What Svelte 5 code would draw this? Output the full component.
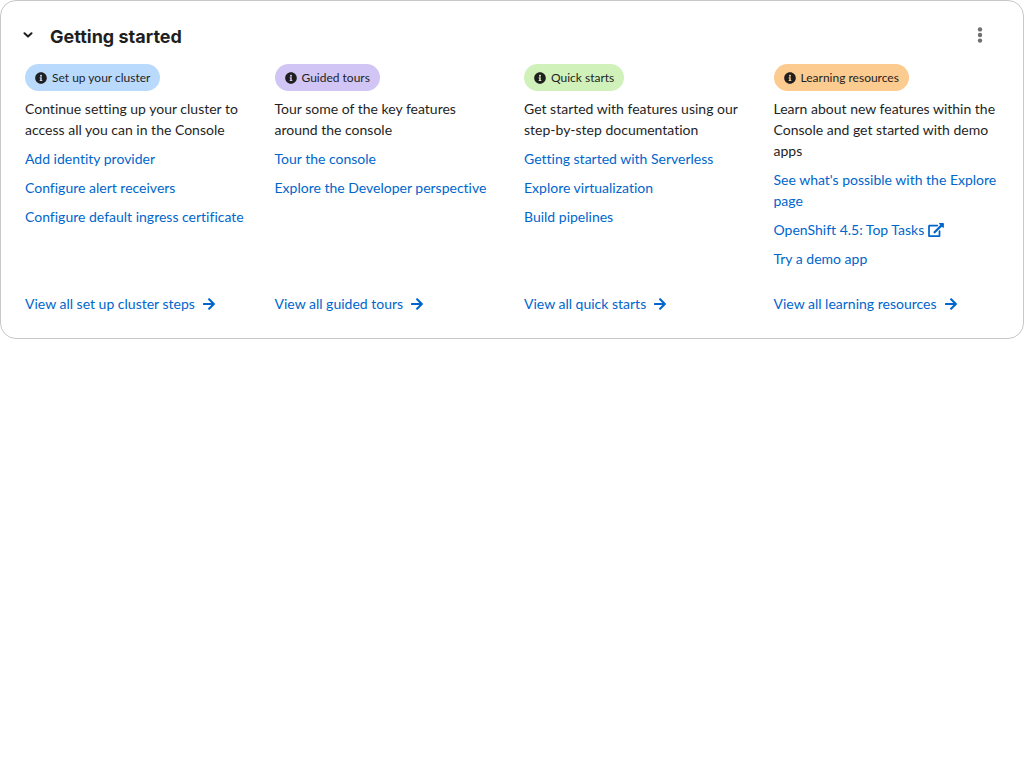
<script>
  let open = $state(true);

  const sections = [
    {
      tone: 'blue',
      title: 'Set up your cluster',
      description: 'Continue setting up your cluster to access all you can in the Console',
      links: [
        { text: 'Add identity provider' },
        { text: 'Configure alert receivers' },
        { text: 'Configure default ingress certificate' }
      ],
      more: 'View all set up cluster steps'
    },
    {
      tone: 'purple',
      title: 'Guided tours',
      description: 'Tour some of the key features around the console',
      links: [{ text: 'Tour the console' }, { text: 'Explore the Developer perspective' }],
      more: 'View all guided tours'
    },
    {
      tone: 'green',
      title: 'Quick starts',
      description: 'Get started with features using our step-by-step documentation',
      links: [
        { text: 'Getting started with Serverless' },
        { text: 'Explore virtualization' },
        { text: 'Build pipelines' }
      ],
      more: 'View all quick starts'
    },
    {
      tone: 'orange',
      title: 'Learning resources',
      description: 'Learn about new features within the Console and get started with demo apps',
      links: [
        { text: "See what's possible with the Explore page" },
        { text: 'OpenShift 4.5: Top Tasks', external: true },
        { text: 'Try a demo app' }
      ],
      more: 'View all learning resources'
    }
  ];
</script>

<section class="card">
  <header>
    <button class="toggle" class:closed={!open} type="button" aria-label="Toggle getting started" aria-expanded={open} onclick={() => (open = !open)}>
      <svg viewBox="0 0 10 6" width="10" height="6" aria-hidden="true">
        <path d="M1.5 1.3 5 4.6 8.5 1.3" fill="none" stroke="currentColor" stroke-width="2" stroke-linecap="round" stroke-linejoin="round" />
      </svg>
    </button>
    <h2>Getting started</h2>
    <button class="menu" type="button" aria-label="Actions">
      <svg viewBox="0 0 6 16" width="6" height="16" fill="currentColor" aria-hidden="true">
        <circle cx="3" cy="2.4" r="2.2" /><circle cx="3" cy="8" r="2.2" /><circle cx="3" cy="13.6" r="2.2" />
      </svg>
    </button>
  </header>

  {#if open}
    <div class="grid">
      {#each sections as section}
        <article>
          <h3 class="label {section.tone}">
            <svg viewBox="0 0 512 512" width="12" height="12" fill="currentColor" aria-hidden="true">
              <path d="M256 8C119.043 8 8 119.083 8 256c0 136.997 111.043 248 248 248s248-111.003 248-248C504 119.083 392.957 8 256 8zm0 110c23.196 0 42 18.804 42 42s-18.804 42-42 42-42-18.804-42-42 18.804-42 42-42zm56 254c0 6.627-5.373 12-12 12h-88c-6.627 0-12-5.373-12-12v-24c0-6.627 5.373-12 12-12h12v-64h-12c-6.627 0-12-5.373-12-12v-24c0-6.627 5.373-12 12-12h64c6.627 0 12 5.373 12 12v100h12c6.627 0 12 5.373 12 12v24z" />
            </svg>
            {section.title}
          </h3>
          <p>{section.description}</p>
          <ul>
            {#each section.links as link}
              <li>
                <a href="#top">{link.text}{#if link.external}<svg class="external" viewBox="0 0 576 512" width="16" height="14" fill="currentColor" aria-hidden="true"><path d="M576 24v127.984c0 21.461-25.96 31.98-40.971 16.971l-35.707-35.709-243.523 243.523c-9.373 9.373-24.568 9.373-33.941 0l-22.627-22.627c-9.373-9.373-9.373-24.569 0-33.941L442.756 76.676l-35.703-35.705C391.982 25.9 402.656 0 424.024 0H552c13.255 0 24 10.745 24 24zM407.029 270.794l-16 16A23.999 23.999 0 0 0 384 303.765V448H64V128h264a24.003 24.003 0 0 0 16.97-7.029l16-16C376.089 89.851 365.381 64 344 64H48C21.49 64 0 85.49 0 112v352c0 26.51 21.49 48 48 48h352c26.51 0 48-21.49 48-48V287.764c0-21.382-25.852-32.09-40.971-16.97z" /></svg>{/if}</a>
              </li>
            {/each}
          </ul>
          <a class="more" href="#top">
            {section.more}
            <svg viewBox="0 0 448 512" width="12" height="14" fill="currentColor" aria-hidden="true">
              <path d="M190.5 66.9l22.2-22.2c9.4-9.4 24.6-9.4 33.9 0L441 239c9.4 9.4 9.4 24.6 0 33.9L246.6 467.3c-9.4 9.4-24.6 9.4-33.9 0l-22.2-22.2c-9.5-9.5-9.3-25 .4-34.3L311.4 296H24c-13.3 0-24-10.7-24-24v-32c0-13.3 10.7-24 24-24h287.4L190.9 101.2c-9.8-9.3-10-24.8-.4-34.3z" />
            </svg>
          </a>
        </article>
      {/each}
    </div>
  {/if}
</section>

<style>
  :global(body) {
    background: #fff;
  }

  .card {
    box-sizing: border-box;
    border: 1px solid #c7c7c7;
    border-radius: 16px;
    padding: 24px;
    color: #1f1f1f;
    background: #fff;
    font-family: Lato, 'Liberation Sans', sans-serif;
    font-size: 14px;
    font-variant-ligatures: none;
    line-height: 21px;
  }

  header {
    display: flex;
    align-items: flex-start;
    height: 24px;
    margin-bottom: 15px;
  }

  button {
    display: flex;
    align-items: center;
    justify-content: center;
    height: 20px;
    padding: 0;
    border: 0;
    background: none;
    cursor: pointer;
  }

  .toggle {
    width: 6px;
    margin-right: 19px;
    color: #1f1f1f;
  }

  .toggle svg {
    flex: none;
  }

  .toggle.closed svg {
    transform: rotate(-90deg);
  }

  .menu {
    width: 38px;
    margin-left: auto;
    color: #707070;
  }

  h2 {
    margin: 0;
    font-family: Inter, 'Liberation Sans', sans-serif;
    font-size: 18px;
    font-weight: 700;
    line-height: 24px;
  }

  .grid {
    display: grid;
    grid-template-columns: repeat(4, minmax(0, 1fr));
    column-gap: 24px;
  }

  article {
    display: flex;
    flex-direction: column;
    align-items: flex-start;
  }

  .label {
    display: flex;
    align-items: center;
    gap: 5px;
    height: 27px;
    margin: 0 0 7px;
    padding: 0 10px;
    border-radius: 14px;
    font-size: 12px;
    font-weight: 400;
    line-height: 18px;
  }

  .blue {
    background: #b9dafc;
  }

  .purple {
    background: #d0c5f4;
  }

  .green {
    background: #d1f1bb;
  }

  .orange {
    background: #fccb8f;
  }

  p {
    margin: 0 0 8px;
  }

  ul {
    display: flex;
    flex-direction: column;
    gap: 8px;
    margin: 0 0 24px;
    padding: 0;
    list-style: none;
  }

  a {
    color: #0066cc;
    text-decoration: none;
  }

  a:hover {
    text-decoration: underline;
  }

  .external {
    margin-left: 4px;
    vertical-align: -2px;
  }

  .more {
    display: flex;
    align-items: center;
    gap: 8px;
    margin-top: auto;
  }
</style>
